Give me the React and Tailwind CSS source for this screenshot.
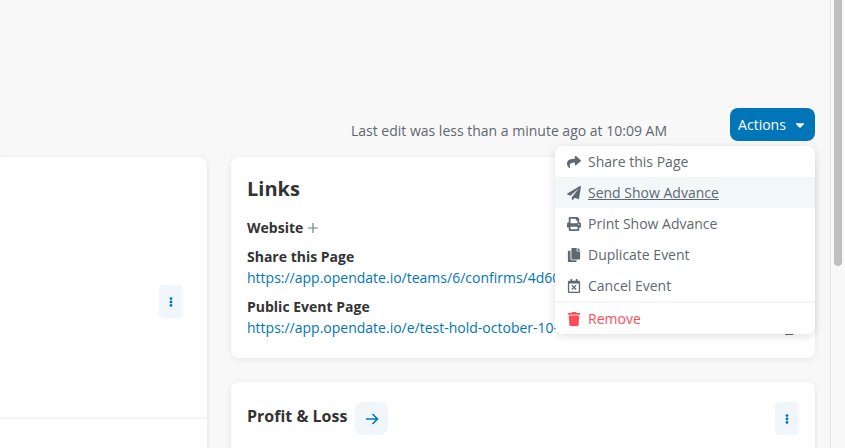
import { FaShare, FaPaperPlane, FaPrint, FaCopy, FaRegCalendarTimes, FaTrash, FaCaretDown, FaEllipsisV, FaRegCopy } from "react-icons/fa";

const menuItems = [
  { label: "Share this Page", icon: FaShare },
  { label: "Send Show Advance", icon: FaPaperPlane, active: true },
  { label: "Print Show Advance", icon: FaPrint },
  { label: "Duplicate Event", icon: FaCopy },
  { label: "Cancel Event", icon: FaRegCalendarTimes },
];

function MoreButton({ className = "" }) {
  return (
    <button type="button" className={`flex h-[33px] w-6 items-center justify-center rounded-[4px] bg-[#f0f6fa] text-[#0075b8] ${className}`}>
      <FaEllipsisV className="text-[10px]" />
    </button>
  );
}

function ActionsMenu() {
  return (
    <div className="absolute right-[15px] top-[38px] z-10 w-[260px] rounded-lg bg-white shadow-[0_2px_10px_rgba(0,0,0,0.13)]">
      {menuItems.map((item) => (
        <div
          key={item.label}
          className={`flex h-[31px] items-center pl-3 text-sm text-[#5f6770] ${item.active ? "bg-[#f2f7fa]" : ""}`}
        >
          <item.icon className="mr-[7px] w-[14px] shrink-0 text-[14px]" />
          <span className={item.active ? "underline" : ""}>{item.label}</span>
        </div>
      ))}
      <div className="h-[33px] border-t-2 border-[#f5f5f5] pl-3 text-sm text-[#ff4d58]">
        <div className="flex h-full items-center">
          <FaTrash className="mr-[7px] w-[14px] shrink-0 text-[14px]" />
          <span>Remove</span>
        </div>
      </div>
    </div>
  );
}

export default function App() {
  return (
    <div className="flex h-[448px] w-[845px] overflow-hidden bg-[#f8f8f8] font-['Open_Sans',sans-serif] text-[#333333]">
      <main className="w-[830px] shrink-0 pt-[108px]">
        <div className="relative ml-auto flex h-[49px] w-[493px] items-start justify-end gap-[63px] pr-[15px]">
          <p className="pt-[13px] text-sm leading-[20px] text-[#5f6770]">Last edit was less than a minute ago at 10:09 AM</p>
          <button type="button" className="flex h-[33px] w-[85px] shrink-0 items-center justify-center gap-[7px] rounded-lg bg-[#0075b8] text-sm text-white">
            Actions
            <FaCaretDown className="text-[14px]" />
          </button>
          <ActionsMenu />
        </div>

        <div className="flex gap-6">
          <section className="h-[400px] w-[207px] shrink-0 rounded-r-lg bg-white shadow-[0_1px_6px_rgba(0,0,0,0.08)]">
            <div className="flex h-[262px] items-start justify-end border-b-2 border-[#f4f4f4] pr-6 pt-[128px]">
              <MoreButton />
            </div>
          </section>

          <div className="flex w-[584px] shrink-0 flex-col gap-6">
            <section className="relative h-[201px] overflow-hidden rounded-lg bg-white p-4 shadow-[0_1px_6px_rgba(0,0,0,0.08)]">
              <h2 className="text-[20px] font-bold leading-[32px]">Links</h2>
              <div className="mt-[12px] flex items-center gap-[5px] text-sm font-bold leading-[22px]">
                Website
                <svg width="10" height="10" viewBox="0 0 10 10" fill="none" stroke="#71808c" strokeWidth="1.2">
                  <path d="M5 0v10M0 5h10" />
                </svg>
              </div>
              <h3 className="mt-[8px] text-sm font-bold leading-[20px]">Share this Page</h3>
              <a className="mt-[1px] block whitespace-nowrap text-sm leading-[20px] text-[#0075b8]">https://app.opendate.io/teams/6/confirms/4d60a1c2</a>
              <h3 className="mt-[9px] text-sm font-bold leading-[20px]">Public Event Page</h3>
              <div className="mt-[1px] flex items-center">
                <a className="block whitespace-nowrap text-sm leading-[20px] text-[#0075b8]">https://app.opendate.io/e/test-hold-october-10-2024</a>
                <FaRegCopy className="absolute right-[17px] top-[164px] text-[14px] text-[#5f6770]" />
              </div>
            </section>

            <section className="flex h-[120px] items-start justify-between rounded-lg bg-white px-4 pt-[20px] shadow-[0_1px_6px_rgba(0,0,0,0.08)]">
              <div className="flex items-start">
                <h2 className="text-base font-bold leading-[28px]">Profit &amp; Loss</h2>
                <button type="button" className="ml-2 flex h-[33px] w-[33px] items-center justify-center rounded-lg bg-[#f0f6fa] text-[#0075b8]">
                  <svg width="14" height="14" viewBox="0 0 14 14" fill="none" stroke="currentColor" strokeWidth="1.6">
                    <path d="M1 7h11.5M7.5 2l5 5-5 5" />
                  </svg>
                </button>
              </div>
              <MoreButton />
            </section>
          </div>
        </div>
      </main>

      <aside className="flex-1 border-l border-[#e6e6e6] bg-[#f8f8f8] pl-[3px]">
        <div className="h-[266px] w-2 rounded-b-full bg-[#bfbfbf]"></div>
      </aside>
    </div>
  );
}
